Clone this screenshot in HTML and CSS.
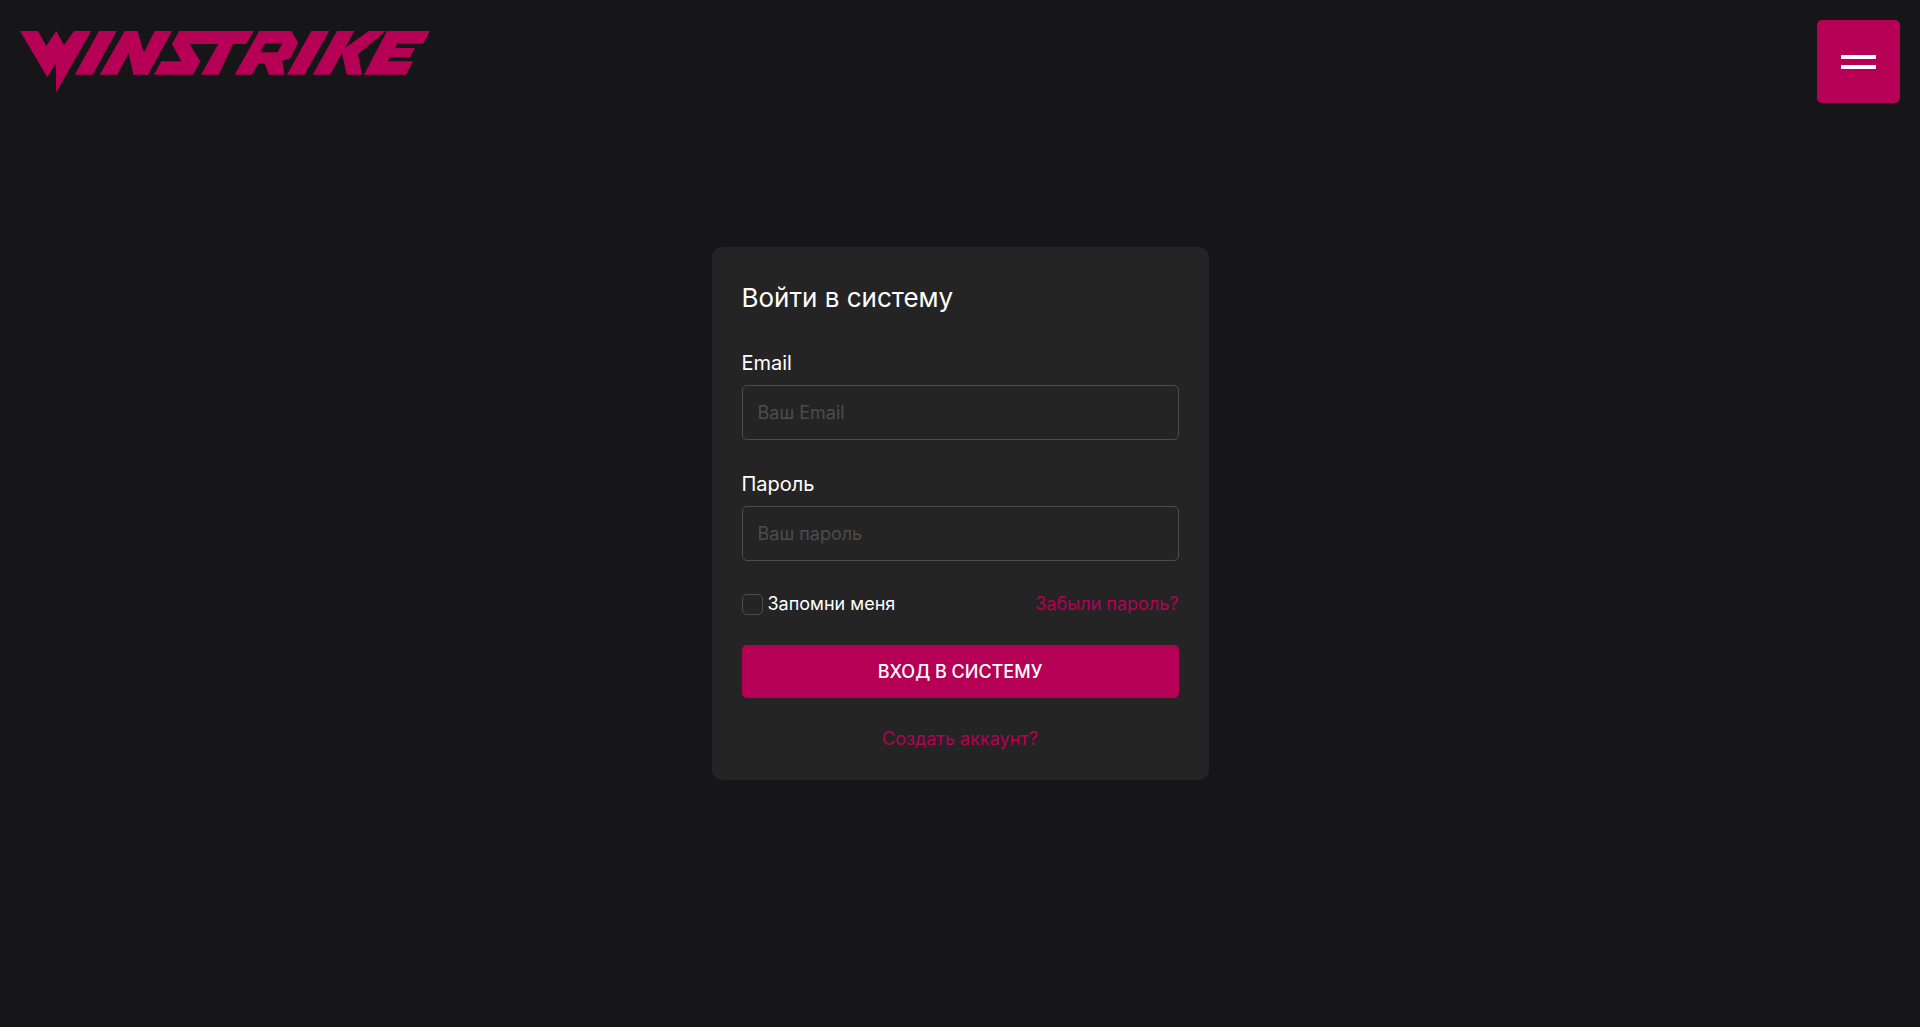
FILE: index.html
```
<!DOCTYPE html>
<html lang="ru">
<head>
    <meta charset="UTF-8">
    <meta name="viewport" content="width=device-width, initial-scale=1.0">
    <title>Winstrike</title>
    <link rel="stylesheet" href="styles.css">
</head>
<body>

    <header class="header">
        <a href="#" class="logo" aria-label="Winstrike">
            <svg viewBox="0 0 410 62" width="410" height="62" fill="currentColor" fill-rule="evenodd">
                <path d="M0 0H18L26.3 14.7L36.3 0L44 14L54 0H71.3L36 61.5V31.7L27.3 46.3Z"/>
                <path d="M79 0H96.7L72.7 43.7H54.7Z"/>
                <path d="M104.7 0H117.7L123.7 21.7L134.7 0H152L128 43.7H113.3L108.7 21.7L97.3 43.7H79.7Z"/>
                <path d="M159.3 0H234L226 13H213L198.7 43.7H181L198.3 13H169.7L180.3 30.3L173 43.7H134L141.3 30.3H161.3L152 13Z"/>
                <path d="M239.3 0H271.3L278.3 11.7L270.3 27.3L262.3 30L264.7 43.7H249L244.7 32.7H238L232 43.7H214.7ZM245 12.3L240.3 21.3H257.7L262.3 12.3Z"/>
                <path d="M291.3 0H309.3L284.3 43.7H267Z"/>
                <path d="M317 0H334.3L325 17L348.7 0H366L338 23L342 43.7H326.7L322 22L310 43.7H292.7Z"/>
                <path d="M367 0H410L403 12.7H377L375 17H395L390 26H370L368 30.3H393L386 43.7H344Z"/>
            </svg>
        </a>
        <button type="button" class="menu-button" aria-label="Меню">
            <span></span>
            <span></span>
        </button>
    </header>

    <main class="main">
        <form class="login">
            <h1>Войти в систему</h1>
            <div class="field">
                <label for="email">Email</label>
                <input type="email" id="email" placeholder="Ваш Email">
            </div>
            <div class="field">
                <label for="password">Пароль</label>
                <input type="password" id="password" placeholder="Ваш пароль">
            </div>
            <div class="options">
                <label class="remember">
                    <input type="checkbox">
                    Запомни меня
                </label>
                <a href="#">Забыли пароль?</a>
            </div>
            <button type="submit" class="submit">Вход в систему</button>
            <a href="#" class="register">Создать аккаунт?</a>
        </form>
    </main>

</body>
</html>
```
FILE: styles.css
```
* {
    box-sizing: border-box;
}

body {
    margin: 0;
    min-height: 100vh;
    display: grid;
    grid-template-rows: auto 1fr auto;
    background-color: #161618;
    color: #fff;
    font-family: Inter, "Liberation Sans", sans-serif;
    font-size: 18px;
    line-height: 26px;
}

/* empty last row keeps the form centred in the window */
body::after {
    content: "";
    height: 123px;
}

a {
    color: #b60055;
    text-decoration: none;
}

.header {
    display: flex;
    justify-content: space-between;
    align-items: center;
    padding: 20px;
}

.logo svg {
    display: block;
}

.menu-button {
    display: flex;
    flex-direction: column;
    justify-content: center;
    align-items: center;
    gap: 6px;
    width: 83px;
    height: 83px;
    padding: 0;
    border: none;
    border-radius: 5px;
    background-color: #b60055;
    cursor: pointer;
}

.menu-button span {
    width: 35px;
    height: 4px;
    background-color: #fff;
}

.main {
    display: flex;
    justify-content: center;
    align-items: center;
}

.login {
    display: flex;
    flex-direction: column;
    width: 100%;
    max-width: 497px;
    padding: 30px 30px 28px;
    border-radius: 10px;
    background-color: #242424;
}

.login h1 {
    margin: 0 0 30px;
    font-size: 26px;
    font-weight: 400;
    line-height: 42px;
}

.field {
    display: flex;
    flex-direction: column;
    gap: 8px;
    margin-bottom: 30px;
}

.field label {
    font-size: 20px;
    line-height: 28px;
}

.field input {
    width: 100%;
    height: 55px;
    padding: 0 15px;
    border: 1px solid #4c4c4e;
    border-radius: 5px;
    background-color: transparent;
    color: #fff;
    font: inherit;
}

.field input::placeholder {
    color: #4c4c4e;
}

.options {
    display: flex;
    justify-content: space-between;
    align-items: center;
    margin-bottom: 28px;
}

.remember {
    display: flex;
    align-items: center;
    gap: 5px;
}

.remember input {
    appearance: none;
    width: 21px;
    height: 21px;
    margin: 0;
    border: 1px solid #4c4c4e;
    border-radius: 5px;
}

.remember input:checked {
    background-color: #b60055;
}

.submit {
    height: 53px;
    margin-bottom: 28px;
    border: none;
    border-radius: 5px;
    background-color: #b60055;
    color: #fff;
    font: inherit;
    font-weight: 500;
    text-transform: uppercase;
    cursor: pointer;
}

.register {
    align-self: center;
}
```
